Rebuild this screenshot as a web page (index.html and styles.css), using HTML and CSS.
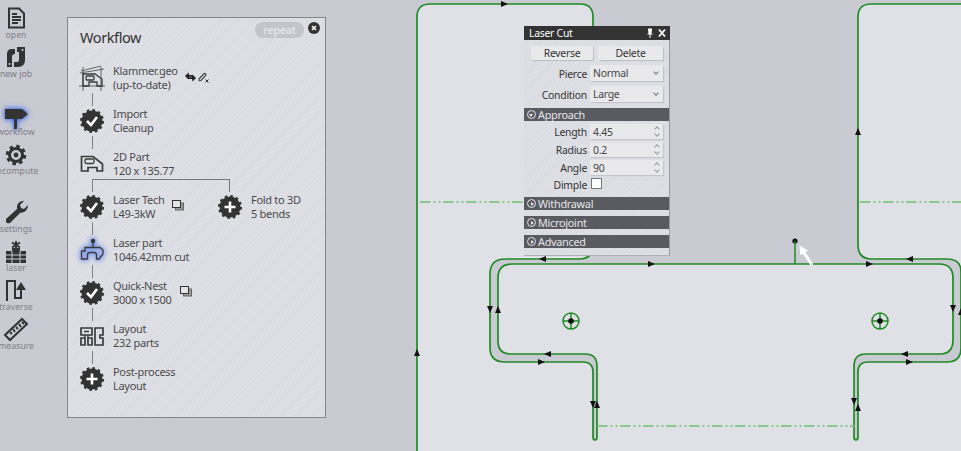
FILE: index.html
```html
<!DOCTYPE html>
<html lang="en">
<head>
  <meta charset="UTF-8" />
  <title>Laser Cut Workflow</title>
  <link rel="stylesheet" href="styles.css">
</head>
<body>

  <svg class="defs" width="0" height="0">
    <symbol id="badge" viewBox="0 0 30 30">
      <circle cx="15" cy="15" r="10.5" fill="#333" stroke="#333" stroke-width="3" stroke-dasharray="2.6 2.9"/>
    </symbol>
    <symbol id="stack" viewBox="0 0 12 11">
      <rect x="3.5" y="3" width="8" height="7" fill="#999" stroke="#666"/>
      <rect x="0.5" y="0.5" width="8" height="7" fill="#e4e4e8" stroke="#333"/>
    </symbol>
    <marker id="head" viewBox="0 0 6 6" refX="4" refY="3" markerWidth="3" markerHeight="3" orient="auto">
      <path d="M0 0L6 3L0 6Z" fill="#fff"/>
    </marker>
  </svg>

  <!-- part drawing -->
  <svg class="canvas" viewBox="0 0 961 451">
    <path class="part" d="M417 452V17Q417 4 430 4H580Q593 4 593 17V245Q593 259 579 259H505Q490 259 490 274V348Q490 362 505 362H583Q593 362 593 372V437Q593 440 595 440Q597 440 597 437V366Q597 354 585 354H511Q498 354 498 341V278Q498 264 512 264H939Q953 264 953 278V340Q953 354 940 354H866Q854 354 854 366V437Q854 440 856 440Q858 440 858 437V372Q858 362 868 362H947Q961 362 961 348V272Q961 259 947 259H872Q858 259 858 245V17Q858 4 871 4H962V452Z"/>
    <path class="bend" d="M420 202H524M860 202H961M597 426H855"/>
    <g class="hole">
      <circle cx="571" cy="321" r="8"/><path d="M563 321H579M571 313V329"/>
      <circle cx="880" cy="321" r="8"/><path d="M872 321H888M880 313V329"/>
    </g>
    <g class="dots">
      <circle cx="571" cy="321" r="2.8"/><circle cx="880" cy="321" r="2.8"/><circle cx="795" cy="241" r="2.6"/>
    </g>
    <path class="lead" d="M795 241V264"/>
    <path class="pointer" d="M812 265L801 248" marker-end="url(#head)"/>
    <g class="arrows">
      <path d="M501 1L508 4L501 7Z"/>
      <path d="M855 135L858 128L861 135Z"/>
      <path d="M414 356L417 349L420 356Z"/>
      <path d="M546 256L539 259L546 262Z"/>
      <path d="M487 306L490 313L493 306Z"/>
      <path d="M495 313L498 306L501 313Z"/>
      <path d="M551 351L544 354L551 357Z"/>
      <path d="M538 359L545 362L538 365Z"/>
      <path d="M590 401L593 408L596 401Z"/>
      <path d="M594 408L597 401L600 408Z"/>
      <path d="M648 261L655 264L648 267Z"/>
      <path d="M866 261L873 264L866 267Z"/>
      <path d="M913 256L906 259L913 262Z"/>
      <path d="M950 305L953 312L956 305Z"/>
      <path d="M958 315L961 308L964 315Z"/>
      <path d="M908 351L901 354L908 357Z"/>
      <path d="M906 359L913 362L906 365Z"/>
      <path d="M851 398L854 405L857 398Z"/>
      <path d="M855 411L858 404L861 411Z"/>
    </g>
  </svg>

  <nav class="sidebar">
    <div class="tool">
      <svg viewBox="0 0 24 24"><path class="ink-line" d="M5 2.500H15L20 7.500V21.500H5Z"/><path class="ink-line" d="M8 11H17M8 14H17M8 17H14M8 8H13" stroke-width="1.600"/></svg>
      <span>open</span>
    </div>
    <div class="tool">
      <svg viewBox="0 0 24 24"><path class="ink" d="M3 9Q3 4 8 4H11V9Q8 9 8 12V22H3ZM13 2H21V15Q21 22 14 22H10V17H13Q15 17 15 15V7H13Z"/><circle cx="5.500" cy="19" r="1" fill="#ddd"/><circle cx="18.500" cy="5" r="1" fill="#ddd"/></svg>
      <span>new job</span>
    </div>
    <div class="tool group glow">
      <svg viewBox="0 0 24 24"><path class="ink" d="M1 6H18L24 11L18 16H13V26H10V16H1Z"/></svg>
      <span>workflow</span>
    </div>
    <div class="tool">
      <svg viewBox="0 0 24 24"><circle cx="12" cy="13" r="6.500" fill="none" stroke="#333" stroke-width="3"/><circle cx="12" cy="13" r="8.500" fill="none" stroke="#333" stroke-width="3.500" stroke-dasharray="3.400 3.270"/><circle cx="12" cy="13" r="2.400" fill="#333"/></svg>
      <span>recompute</span>
    </div>
    <div class="tool group">
      <svg viewBox="0 0 24 24"><path class="ink" d="M2 19L13 9Q12 3 18 1L20 1L16 5L17 8L20 9L24 5Q24 12 16 13L6 23Q3 24 2 22Z"/></svg>
      <span>settings</span>
    </div>
    <div class="tool">
      <svg viewBox="0 0 24 24"><path class="ink-line" d="M8 3.500L16 8.500M16 3.500L8 8.500M12 2V10" stroke-width="1.300"/><path class="ink" d="M8 9H16V12H8Z"/><path class="ink" d="M2 12H22V24H2Z"/><path d="M2 16H22M2 20H22M8 12V24M16 12V24" stroke="#c9cad2" fill="none"/></svg>
      <span>laser</span>
    </div>
    <div class="tool">
      <svg viewBox="0 0 24 24"><path class="ink-line" d="M3 23V3H11V20H17V11" stroke-width="2.200"/><path class="ink" d="M12 12L17 4L22 12Z"/></svg>
      <span>traverse</span>
    </div>
    <div class="tool">
      <svg viewBox="0 0 24 24"><path class="ink-line" d="M1 18L18 2L23 7L6 23Z" stroke-width="1.300"/><path class="ink-line" d="M6 15L8 17M9 12L11 15M12 10L14 12M15 7L17 10M18 5L20 7" stroke-width="1"/></svg>
      <span>measure</span>
    </div>
  </nav>

  <section class="workflow">
    <div class="wf-head">
      <h1>Workflow</h1>
      <span class="repeat">repeat</span>
      <span class="close">
        <svg viewBox="0 0 12 12" width="12" height="12"><circle cx="6" cy="6" r="6" fill="#333"/><path d="M4 4L8 8M8 4L4 8" stroke="#fff" stroke-width="1.600"/></svg>
      </span>
    </div>

    <div class="row">
      <div class="step">
        <div class="icon link">
          <svg viewBox="0 0 30 30"><path class="thin" d="M4 8L24 3M2 23H28M6 4V28M24 4V28M3 10L27 6"/><path class="thin2" d="M6 11H18L25 16V23H20V19H12V23H6Z"/><rect class="thin2" x="9" y="13" width="8" height="4" rx="1"/></svg>
        </div>
        <p>Klammer.geo<br>(up-to-date)</p>
        <svg class="tags" viewBox="0 0 24 12" width="24" height="12"><path d="M0 5L3.500 1.500L4 4H8V5.800H4L3.500 8.500ZM11 7L7.500 10.500L7 8H3V6.200H7L7.500 3.500Z" fill="#222"/><path d="M14 8L19 2.500Q21 2 21 4L16 9.500Q13.500 10.500 14 8Z" fill="none" stroke="#444" stroke-width="1.200"/><path d="M20.500 8.500L23.500 11.500M23.500 8.500L20.500 11.500" stroke="#333"/></svg>
      </div>
    </div>

    <div class="row">
      <div class="step">
        <div class="icon link">
          <svg viewBox="0 0 30 30"><use href="#badge"/><path class="mark" d="M10 15L14 19L20 11"/></svg>
        </div>
        <p>Import<br>Cleanup</p>
      </div>
    </div>

    <div class="row">
      <div class="step">
        <div class="icon link branch">
          <svg viewBox="0 0 30 30"><path class="thin2 heavy" d="M4.500 7.500H16L25.500 15V22H20V18.500H11V22H4.500Z"/><rect class="thin2" x="8" y="10" width="9" height="4.500" rx="1.500"/></svg>
        </div>
        <p>2D Part<br>120 x 135.77</p>
      </div>
    </div>

    <div class="row">
      <div class="step">
        <div class="icon link">
          <svg viewBox="0 0 30 30"><use href="#badge"/><path class="mark" d="M10 15L14 19L20 11"/></svg>
        </div>
        <p>Laser Tech<br>L49-3kW</p>
        <svg class="copies" width="12" height="11"><use href="#stack"/></svg>
      </div>
      <div class="step">
        <div class="icon">
          <svg viewBox="0 0 30 30"><use href="#badge"/><path class="mark" d="M15 9.500V20.500M9.500 15H20.500"/></svg>
        </div>
        <p>Fold to 3D<br>5 bends</p>
      </div>
    </div>

    <div class="row">
      <div class="step">
        <div class="icon link glow">
          <svg viewBox="0 0 30 30"><circle cx="16" cy="6" r="2.200" fill="#333"/><path class="thin2" d="M16 7V12M4.500 24V16H8V12.500H23L26 15V19L22 24H19.500V20Q19.500 17.500 17 17.500H13Q10.500 17.500 10.500 20V24Z" stroke-width="2.200"/></svg>
        </div>
        <p>Laser part<br>1046.42mm cut</p>
      </div>
    </div>

    <div class="row">
      <div class="step">
        <div class="icon link">
          <svg viewBox="0 0 30 30"><use href="#badge"/><path class="mark" d="M10 15L14 19L20 11"/></svg>
        </div>
        <p>Quick-Nest<br>3000 x 1500</p>
        <svg class="copies" width="12" height="11"><use href="#stack"/></svg>
      </div>
    </div>

    <div class="row">
      <div class="step">
        <div class="icon link">
          <svg viewBox="0 0 30 30"><path class="thin2 heavy" d="M4 7H15V14H4ZM4 17H8V24H4ZM11 17H15V24H11ZM18 7H26V14H23V17H26V24H18Z"/><path class="thin2" d="M7 10.500H12M8 17V14M11 17V14"/></svg>
        </div>
        <p>Layout<br>232 parts</p>
      </div>
    </div>

    <div class="row">
      <div class="step">
        <div class="icon">
          <svg viewBox="0 0 30 30"><use href="#badge"/><path class="mark" d="M15 9.500V20.500M9.500 15H20.500"/></svg>
        </div>
        <p>Post-process<br>Layout</p>
      </div>
    </div>
  </section>

  <section class="laser">
    <div class="laser-title">
      <span>Laser Cut</span>
      <svg viewBox="0 0 22 10" width="22" height="10"><path d="M3 0.500H7V1.500L6.500 5L8 6.500H5.500V10H4.500V6.500H2L3.500 5L3 1.500Z" fill="#fff"/><path d="M14 1.500L20 8.500M20 1.500L14 8.500" stroke="#fff" stroke-width="1.800"/></svg>
    </div>
    <div class="btns">
      <button>Reverse</button>
      <button>Delete</button>
    </div>
    <div class="field tall"><label>Pierce</label><div class="box select">Normal</div></div>
    <div class="field tall"><label>Condition</label><div class="box select">Large</div></div>

    <h2 class="bar open">Approach</h2>
    <div class="fields">
      <div class="field"><label>Length</label><div class="box spin">4.45</div></div>
      <div class="field"><label>Radius</label><div class="box spin">0.2</div></div>
      <div class="field"><label>Angle</label><div class="box spin">90</div></div>
      <div class="field short"><label>Dimple</label><div class="check"></div></div>
    </div>

    <h2 class="bar">Withdrawal</h2>
    <h2 class="bar">Microjoint</h2>
    <h2 class="bar">Advanced</h2>
  </section>

</body>
</html>
```

FILE: styles.css
```css
body {
  margin: 0;
  width: 961px;
  height: 451px;
  overflow: hidden;
  background: #c9cad2;
  font-family: "Noto Sans", "Open Sans", sans-serif;
  color: #444;
  position: relative;
}

.defs {
  position: absolute;
}

.canvas {
  position: absolute;
  left: 0;
  top: 0;
  width: 961px;
  height: 451px;
}

.part {
  fill: #e0e1e6;
  stroke: #1f8a24;
  stroke-width: 1.7;
}

.bend {
  fill: none;
  stroke: #6cc26f;
  stroke-width: 1.4;
  stroke-dasharray: 10.500 3 2 3 2 2.500;
}

.hole {
  fill: none;
  stroke: #1f8a24;
  stroke-width: 1.5;
}

.dots,
.arrows {
  fill: #111;
}

.lead {
  stroke: #1f8a24;
  stroke-width: 1.5;
}

.pointer {
  stroke: #fff;
  stroke-width: 3;
  fill: none;
}

/* left tool strip */
.sidebar {
  position: absolute;
  left: 0;
  top: 0;
  width: 32px;
  display: flex;
  flex-direction: column;
}

.tool {
  height: 39px;
  padding-top: 6px;
  box-sizing: border-box;
  display: flex;
  flex-direction: column;
  align-items: center;
  white-space: nowrap;
}

.tool.group {
  margin-top: 19px;
}

.tool svg {
  width: 24px;
  height: 24px;
  flex: none;
  overflow: visible;
}

.tool span {
  margin-top: 1px;
  font-size: 8.700px;
  line-height: 9px;
  color: #808086;
}

.ink {
  fill: #333;
}

.ink-line {
  fill: none;
  stroke: #333;
  stroke-width: 2;
}

.glow svg {
  filter: drop-shadow(0 0 2.500px rgba(47, 98, 240, 0.8)) drop-shadow(0 0 2px rgba(47, 98, 240, 0.6));
}

/* workflow window */
.workflow {
  position: absolute;
  left: 67px;
  top: 17px;
  width: 259px;
  height: 401px;
  box-sizing: border-box;
  border: 1px solid #85858b;
  background: repeating-linear-gradient(135deg, #dadbe1 0 1px, #dfe0e5 1px 3px);
  padding: 0 0 0 9px;
}

.wf-head {
  display: flex;
  height: 32px;
  margin-bottom: 6px;
  align-items: flex-start;
}

.wf-head h1 {
  flex: 1;
  margin: 11px 0 0 3px;
  font-size: 14.500px;
  letter-spacing: -0.400px;
  line-height: 16px;
  font-weight: 400;
  color: #333;
}

.repeat {
  margin: 4px 4px 0 0;
  width: 49px;
  height: 16px;
  border-radius: 8px;
  background: #c4c5cc;
  color: #eeeef1;
  font-size: 10.500px;
  line-height: 16px;
  text-align: center;
}

.close {
  margin: 4px 5px 0 0;
  height: 12px;
}

.close svg {
  display: block;
}

.row {
  display: flex;
  height: 43px;
  align-items: center;
}

.step {
  display: flex;
  align-items: center;
  width: 138px;
  flex: none;
}

.icon {
  position: relative;
  width: 30px;
  height: 30px;
  flex: none;
}

.icon svg {
  display: block;
  width: 30px;
  height: 30px;
  overflow: visible;
}

.icon.link::after {
  content: "";
  position: absolute;
  left: 14.500px;
  top: 100%;
  width: 1.500px;
  height: 13px;
  background: #808086;
}

.icon.branch::before {
  content: "";
  position: absolute;
  left: 15px;
  top: 30px;
  width: 137px;
  height: 12px;
  border-top: 1px solid #77777c;
  border-right: 1px solid #77777c;
}

.step p {
  margin: 1px 0 0 6px;
  font-size: 11px;
  letter-spacing: -0.300px;
  line-height: 14.300px;
  white-space: nowrap;
  color: #4a4a4a;
}

.thin {
  fill: none;
  stroke: #555;
  stroke-width: 0.9;
}

.thin2 {
  fill: none;
  stroke: #3a3a3a;
  stroke-width: 1.300;
}

.heavy {
  stroke-width: 1.700;
}

.mark {
  fill: none;
  stroke: #fff;
  stroke-width: 2.600;
}

.tags {
  margin: 0 0 2px 7px;
  flex: none;
}

.copies {
  margin: 0 0 2px 8px;
  flex: none;
}

/* laser cut panel */
.laser {
  position: absolute;
  left: 524px;
  top: 26px;
  width: 146px;
  height: 230px;
  box-sizing: border-box;
  border-right: 1px solid #9a9aa0;
  border-bottom: 1px solid #b0b0b6;
  background: repeating-linear-gradient(135deg, #dadbe1 0 1px, #dfe0e5 1px 3px);
  font-size: 10.400px;
  letter-spacing: -0.250px;
}

.laser-title {
  display: flex;
  justify-content: space-between;
  align-items: center;
  height: 14px;
  padding: 0 3px 0 5px;
  background: #333;
  color: #fff;
  margin-right: -1px;
}

.btns {
  display: flex;
  gap: 5px;
  padding: 6px 6px 0 7px;
}

.btns button {
  flex: 1;
  height: 14px;
  padding: 1px 0 0;
  border: 0;
  border-radius: 1px;
  background: #e9e9ec;
  box-shadow: 1px 1px 1px #bcbcc2;
  font: inherit;
  letter-spacing: inherit;
  line-height: 13px;
  color: #333;
}

.btns button:first-child {
  flex: 0 0 62px;
}

.field {
  display: flex;
  align-items: center;
  height: 18px;
}

.field.tall {
  height: 20px;
}

.field.tall + .field.tall {
  margin-top: 1px;
}

.field.short {
  height: 16px;
}

.field label {
  width: 63px;
  margin-right: 3px;
  padding-top: 1px;
  text-align: right;
  color: #333;
}

.btns + .field {
  margin-top: 3px;
}

.box {
  position: relative;
  box-sizing: border-box;
  width: 73px;
  height: 15px;
  padding: 1px 0 0 3px;
  line-height: 14px;
  background: #e9e9ec;
  box-shadow: 1px 1px 1px #c4c4ca;
  color: #444;
}

.tall .box {
  height: 16px;
  line-height: 15px;
}

.select::after {
  content: "";
  position: absolute;
  right: 5px;
  top: 5px;
  width: 3px;
  height: 3px;
  border-right: 1px solid #777;
  border-bottom: 1px solid #777;
  transform: rotate(45deg);
}

.spin::before,
.spin::after {
  content: "";
  position: absolute;
  right: 4px;
  width: 3px;
  height: 3px;
  border-left: 1px solid #999;
  border-top: 1px solid #999;
}

.spin::before {
  top: 3px;
  transform: rotate(45deg);
}

.spin::after {
  bottom: 3px;
  transform: rotate(225deg);
}

.check {
  width: 9px;
  height: 9px;
  margin-left: 1px;
  background: #fff;
  border: 1px solid #777;
}

.bar {
  position: relative;
  height: 13px;
  margin: 0 0 6px;
  padding-left: 14px;
  background: #5a5b60;
  color: #e6e6ea;
  font-size: 10.800px;
  font-weight: 400;
  line-height: 14px;
}

.bar::before {
  content: "";
  position: absolute;
  left: 3px;
  top: 2px;
  width: 7px;
  height: 7px;
  border: 1px solid #e6e6ea;
  border-radius: 50%;
}

.bar::after {
  content: "";
  position: absolute;
  left: 6.500px;
  top: 4.500px;
  border-left: 3px solid #e6e6ea;
  border-top: 2px solid transparent;
  border-bottom: 2px solid transparent;
}

.bar.open::after {
  left: 5px;
  top: 6px;
  border-top: 3px solid #e6e6ea;
  border-left: 2px solid transparent;
  border-right: 2px solid transparent;
  border-bottom: 0;
}

.btns ~ .bar.open {
  margin: 4px 0 1px;
}

.fields {
  margin-bottom: 5px;
}

.field.short .check {
  margin-bottom: 1px;
}
```
